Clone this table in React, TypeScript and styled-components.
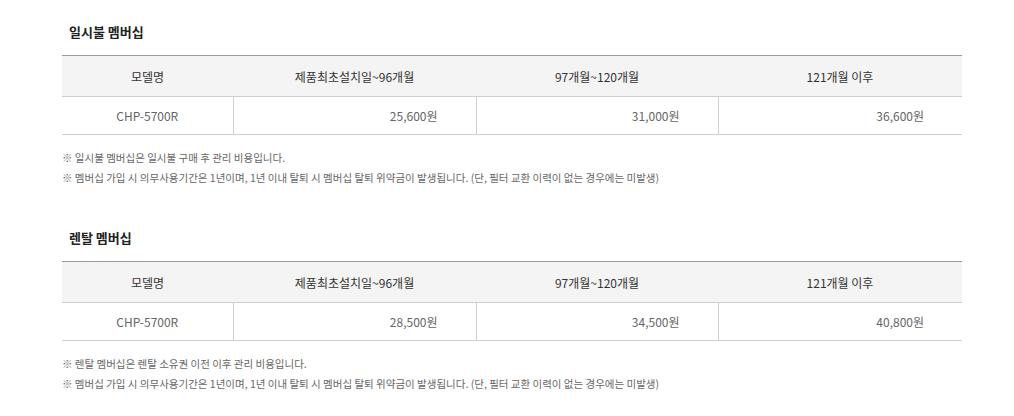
import styled, { createGlobalStyle } from "styled-components";

const GlobalStyle = createGlobalStyle`
  body {
    margin: 0;
    background: #fff;
    font-family: "Noto Sans CJK KR", "Noto Sans", sans-serif;
  }
`;

const Page = styled.div`
  padding: 18px 52px 0 62px;
  width: 900px;
`;

const Section = styled.section`
  margin-bottom: 36px;
`;

const Title = styled.h3`
  margin: 0 0 11px;
  padding: 2px 0 0 7px;
  font-size: 13px;
  font-weight: 700;
  color: #222;
  line-height: 24px;
`;

const Table = styled.table`
  width: 100%;
  border-collapse: collapse;
  table-layout: fixed;
  border-top: 1px solid #9a9a9a;
`;

const Th = styled.th`
  height: 40px;
  padding: 0;
  background: #f4f4f4;
  border-bottom: 1px solid #cfcfcf;
  font-size: 12px;
  font-weight: 400;
  color: #333;
  text-align: center;
`;

const Td = styled.td<{ $align?: "center" | "right" }>`
  height: 37px;
  padding: 0 38px 0 0;
  border-bottom: 1px solid #cfcfcf;
  border-left: 1px solid #cfcfcf;
  font-size: 12px;
  color: #666;
  text-align: ${(p) => p.$align ?? "right"};

  &:first-child {
    border-left: none;
    padding: 0;
  }
`;

const Notes = styled.ul`
  list-style: none;
  margin: 13px 0 0;
  padding: 0;
`;

const Note = styled.li`
  font-size: 10.5px;
  color: #666;
  line-height: 20px;
`;

type Plan = {
  title: string;
  prices: string[];
  notes: string[];
};

const plans: Plan[] = [
  {
    title: "일시불 멤버십",
    prices: ["25,600원", "31,000원", "36,600원"],
    notes: [
      "※ 일시불 멤버십은 일시불 구매 후 관리 비용입니다.",
      "※ 멤버십 가입 시 의무사용기간은 1년이며, 1년 이내 탈퇴 시 멤버십 탈퇴 위약금이 발생됩니다. (단, 필터 교환 이력이 없는 경우에는 미발생)",
    ],
  },
  {
    title: "렌탈 멤버십",
    prices: ["28,500원", "34,500원", "40,800원"],
    notes: [
      "※ 렌탈 멤버십은 렌탈 소유권 이전 이후 관리 비용입니다.",
      "※ 멤버십 가입 시 의무사용기간은 1년이며, 1년 이내 탈퇴 시 멤버십 탈퇴 위약금이 발생됩니다. (단, 필터 교환 이력이 없는 경우에는 미발생)",
    ],
  },
];

const headers = ["모델명", "제품최초설치일~96개월", "97개월~120개월", "121개월 이후"];
const widths = [171, 243, 242, 244];

function App() {
  return (
    <>
      <GlobalStyle />
      <Page>
        {plans.map((plan) => (
          <Section key={plan.title}>
            <Title>{plan.title}</Title>
            <Table>
              <colgroup>
                {widths.map((w, i) => (
                  <col key={i} style={{ width: w }} />
                ))}
              </colgroup>
              <thead>
                <tr>
                  {headers.map((h) => (
                    <Th key={h}>{h}</Th>
                  ))}
                </tr>
              </thead>
              <tbody>
                <tr>
                  <Td $align="center">CHP-5700R</Td>
                  {plan.prices.map((p) => (
                    <Td key={p}>{p}</Td>
                  ))}
                </tr>
              </tbody>
            </Table>
            <Notes>
              {plan.notes.map((n) => (
                <Note key={n}>{n}</Note>
              ))}
            </Notes>
          </Section>
        ))}
      </Page>
    </>
  );
}

export default App;
